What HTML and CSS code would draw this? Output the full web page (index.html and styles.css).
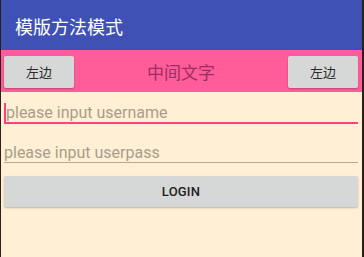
FILE: index.html
```html
<!DOCTYPE html>
<html>
<head>
<meta charset="utf-8">
<link rel="stylesheet" href="styles.css">
</head>
<body>
<div class="app">
  <header class="appbar"><span class="title">模版方法模式</span></header>
  <div class="topbar">
    <div class="btn small">左边</div>
    <div class="center">中间文字</div>
    <div class="btn small">左边</div>
  </div>
  <div class="content">
    <div class="field active"><span class="cursor"></span><span class="hint">please input username</span></div>
    <div class="field"><span class="hint">please input userpass</span></div>
    <div class="btn login">LOGIN</div>
  </div>
</div>
</body>
</html>
```
FILE: styles.css
```css
html, body {
  margin: 0;
  padding: 0;
  height: 100%;
  background: #2a1f1a;
}
.app {
  margin: 0 2px 0 1px;
  height: 257px;
  background: #FFEFD5;
  font-family: Roboto, "Noto Sans CJK SC", sans-serif;
  overflow: hidden;
}
.appbar {
  height: 50px;
  background: #3F51B5;
  display: flex;
  align-items: center;
  padding-left: 14px;
  box-sizing: border-box;
}
.title {
  color: #ffffff;
  font-size: 18px;
  font-family: "Noto Sans CJK SC", sans-serif;
  line-height: 20px;
  padding-top: 1px;
}
.topbar {
  height: 42px;
  background: #FF5C9A;
  display: flex;
  align-items: center;
  justify-content: space-between;
  padding: 0 4px 0 3px;
  box-sizing: border-box;
}
.btn {
  background: #D6D7D7;
  border-radius: 2px;
  box-shadow: 0 1px 2px rgba(0,0,0,0.25);
  display: flex;
  align-items: center;
  justify-content: center;
  color: #2b2b2b;
}
.small {
  width: 70px;
  height: 32px;
  font-size: 13px;
  font-family: "Noto Sans CJK SC", sans-serif;
  margin-top: 1px;
}
.center {
  font-family: "Noto Sans CJK SC", sans-serif;
  font-size: 17px;
  color: #9A2E60;
  line-height: 20px;
  margin-top: 2px;
}
.content {
  padding: 0 4px 0 3px;
}
.field {
  padding-top: 11px;
  height: 19px;
  line-height: 19px;
  font-size: 16px;
  color: #A89E8A;
  border-bottom: 1px solid #B5AA90;
  display: flex;
  align-items: center;
  margin-bottom: 8px;
}
.field.active {
  border-bottom: 2px solid #FF4081;
}
.cursor {
  display: inline-block;
  width: 2px;
  height: 19px;
  background: #FF4081;
  margin-right: 0;
}
.hint {
  white-space: nowrap;
}
.login {
  margin-top: 13px;
  height: 31px;
  font-size: 13px;
  font-weight: 500;
  color: #1e1e1e;
  letter-spacing: 0.2px;
}
```
